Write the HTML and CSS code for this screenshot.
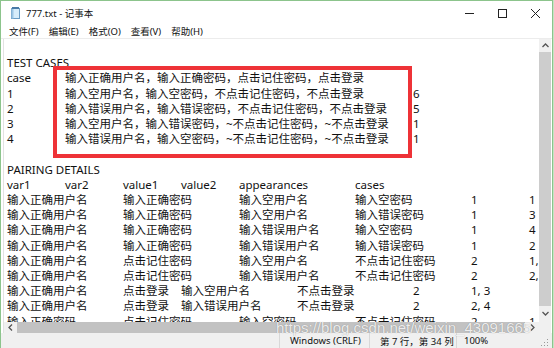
FILE: index.html
```html
<!DOCTYPE html>
<html lang="zh-CN">
<head>
<meta charset="utf-8">
<title>777.txt - 记事本</title>
<link rel="stylesheet" href="styles.css">
</head>
<body>
<div class="window">
  <div class="titlebar">
    <svg class="app-icon" width="9" height="12" viewBox="0 0 9 12">
      <rect x="0.5" y="1.5" width="8" height="10" fill="#d6ecfa" stroke="#6a9cc4"/>
      <rect x="0.5" y="1.5" width="2" height="10" fill="#9cc6e6"/>
      <rect x="1" y="0" width="7" height="2" fill="#4a7aa6"/>
    </svg>
    <span class="title">777.txt - 记事本</span>
    <div class="controls">
      <span class="ctl"><svg width="9" height="9" viewBox="0 0 9 9"><path d="M0 4.5H9" stroke="#222" stroke-width="1"/></svg></span>
      <span class="ctl"><svg width="9" height="9" viewBox="0 0 9 9"><rect x="0.5" y="0.5" width="8" height="8" fill="none" stroke="#222" stroke-width="1"/></svg></span>
      <span class="ctl"><svg width="9" height="9" viewBox="0 0 9 9"><path d="M0 0L9 9M9 0L0 9" stroke="#222" stroke-width="1"/></svg></span>
    </div>
  </div>
  <div class="menubar">
    <span class="menu-item">文件(F)</span>
    <span class="menu-item">编辑(E)</span>
    <span class="menu-item">格式(O)</span>
    <span class="menu-item">查看(V)</span>
    <span class="menu-item">帮助(H)</span>
  </div>
  <div class="client">
    <div class="editor-row">
<pre class="text">

TEST CASES
case&#9;输入正确用户名，输入正确密码，点击记住密码，点击登录
1&#9;输入空用户名，输入空密码，不点击记住密码，不点击登录&#9;6
2&#9;输入错误用户名，输入错误密码，不点击记住密码，不点击登录&#9;5
3&#9;输入空用户名，输入错误密码，~不点击记住密码，~不点击登录&#9;1
4&#9;输入错误用户名，输入空密码，~不点击记住密码，~不点击登录&#9;1

PAIRING DETAILS
var1&#9;var2&#9;value1&#9;value2&#9;appearances&#9;cases
输入正确用户名&#9;输入正确密码&#9;输入空用户名&#9;输入空密码&#9;1&#9;1
输入正确用户名&#9;输入正确密码&#9;输入空用户名&#9;输入错误密码&#9;1&#9;3
输入正确用户名&#9;输入正确密码&#9;输入错误用户名&#9;输入空密码&#9;1&#9;4
输入正确用户名&#9;输入正确密码&#9;输入错误用户名&#9;输入错误密码&#9;1&#9;2
输入正确用户名&#9;点击记住密码&#9;输入空用户名&#9;不点击记住密码&#9;2&#9;1, 3
输入正确用户名&#9;点击记住密码&#9;输入错误用户名&#9;不点击记住密码&#9;2&#9;2, 4
输入正确用户名&#9;点击登录&#9;输入空用户名&#9;不点击登录&#9;2&#9;1, 3
输入正确用户名&#9;点击登录&#9;输入错误用户名&#9;不点击登录&#9;2&#9;2, 4
输入正确密码&#9;点击记住密码&#9;输入空密码&#9;不点击记住密码&#9;2&#9;1, 3</pre>
      <div class="vscroll">
        <div class="sbtn"><svg width="7" height="5" viewBox="0 0 7 5"><path d="M0.5 4L3.5 1L6.5 4" fill="none" stroke="#555" stroke-width="1.3"/></svg></div>
        <div class="vthumb"></div>
        <div class="sbtn down"><svg width="7" height="5" viewBox="0 0 7 5"><path d="M0.5 1L3.5 4L6.5 1" fill="none" stroke="#555" stroke-width="1.3"/></svg></div>
      </div>
    </div>
    <div class="hscroll-row">
      <div class="hscroll">
        <div class="hbtn"><svg width="5" height="7" viewBox="0 0 5 7"><path d="M4 0.5L1 3.5L4 6.5" fill="none" stroke="#555" stroke-width="1.3"/></svg></div>
        <div class="hthumb"></div>
        <div class="hbtn right"><svg width="5" height="7" viewBox="0 0 5 7"><path d="M1 0.5L4 3.5L1 6.5" fill="none" stroke="#555" stroke-width="1.3"/></svg></div>
      </div>
      <div class="corner"></div>
    </div>
  </div>
  <div class="statusbar">
    <div class="seg seg-empty"></div>
    <div class="seg seg-eol">Windows (CRLF)</div>
    <div class="seg seg-pos">第 7 行，第 34 列</div>
    <div class="seg seg-zoom">100%</div>
    <svg class="grip" width="8" height="8" viewBox="0 0 8 8">
      <rect x="6" y="0" width="1" height="1" fill="#999"/>
      <rect x="3" y="3" width="1" height="1" fill="#999"/>
      <rect x="6" y="3" width="1" height="1" fill="#999"/>
      <rect x="0" y="6" width="1" height="1" fill="#999"/>
      <rect x="3" y="6" width="1" height="1" fill="#999"/>
      <rect x="6" y="6" width="1" height="1" fill="#999"/>
    </svg>
  </div>
  <div class="annotation"></div>
  <div class="watermark">https://blog.csdn.net/weixin_43091665</div>
</div>
</body>
</html>
```
FILE: styles.css
```css
* { box-sizing: border-box; }
html, body { margin: 0; padding: 0; }
body {
  width: 554px;
  height: 348px;
  overflow: hidden;
  background: #c4e4c4;
  font-family: "Noto Sans", "Noto Sans CJK SC", sans-serif;
  color: #111;
}
.window {
  position: relative;
  width: 553px;
  height: 348px;
  background: #fff;
  border: 1px solid #8cc48c;
  border-bottom: 0;
  display: flex;
  flex-direction: column;
}
.titlebar {
  height: 23px;
  flex: none;
  display: flex;
  align-items: center;
  padding-left: 10px;
  padding-top: 1px;
}
.app-icon { display: block; flex: none; }
.title {
  margin-left: 6px;
  font-size: 9.5px;
  color: #111;
}
.controls {
  margin-left: auto;
  display: flex;
}
.ctl {
  width: 33px;
  height: 22px;
  display: flex;
  align-items: center;
  justify-content: center;
}
.ctl svg { display: block; }
.menubar {
  height: 15px;
  flex: none;
  display: flex;
  align-items: center;
  gap: 10px;
  padding-left: 8px;
  border-bottom: 1px solid #ececec;
  font-size: 9.5px;
}
.client {
  flex: 1;
  display: flex;
  flex-direction: column;
  margin-left: 2px;
  border-left: 1px solid #e2e2e2;
  min-height: 0;
}
.editor-row {
  height: 283px;
  flex: none;
  display: flex;
}
.text {
  flex: 1;
  margin: 0;
  padding: 1px 0 0 3px;
  font-family: "Noto Sans", "Noto Sans CJK SC", sans-serif;
  font-size: 11.5px;
  line-height: 15.2px;
  tab-size: 58px;
  -moz-tab-size: 58px;
  white-space: pre;
  overflow: hidden;
  color: #111;
}
.vscroll {
  width: 12px;
  margin-right: 1px;
  flex: none;
  display: flex;
  flex-direction: column;
  background: #f0f0f0;
  padding-bottom: 2px;
}
.sbtn {
  height: 13px;
  display: flex;
  align-items: center;
  justify-content: center;
}
.sbtn.down { height: 14px; }
.vthumb {
  flex: 1;
  background: #cdcdcd;
}
.hscroll-row {
  height: 11px;
  flex: none;
  display: flex;
}
.hscroll {
  flex: 1;
  display: flex;
  background: #f0f0f0;
}
.hbtn {
  width: 13px;
  display: flex;
  align-items: center;
  justify-content: center;
}
.hbtn.right { width: 14px; }
.hthumb {
  flex: 1;
  background: #c2c2c2;
}
.corner {
  width: 12px;
  margin-right: 1px;
  background: #f0f0f0;
}
.statusbar {
  height: 15px;
  flex: none;
  display: flex;
  align-items: center;
  background: #f0f0f0;
  font-size: 9.5px;
  color: #111;
  position: relative;
}
.seg {
  height: 100%;
  display: flex;
  align-items: center;
  white-space: nowrap;
}
.seg-empty { width: 278px; }
.seg-eol { width: 90px; padding-left: 10px; border-left: 1px solid #d8d8d8; }
.seg-pos { width: 87px; padding-left: 10px; border-left: 1px solid #d8d8d8; }
.seg-zoom { flex: 1; padding-left: 7px; border-left: 1px solid #d8d8d8; }
.grip { display: block; margin: 5px 3px 0 0; flex: none; }
.annotation {
  position: absolute;
  left: 52px;
  top: 65px;
  width: 359px;
  height: 92px;
  border: 4px solid #ee3237;
}
.watermark {
  position: absolute;
  left: 275px;
  top: 320px;
  font-family: "Liberation Sans", Arial, sans-serif;
  font-size: 15px;
  line-height: 13px;
  color: rgba(255, 255, 255, 0.85);
  text-shadow: 0 0 1px rgba(0, 0, 0, 0.35);
  white-space: nowrap;
}
```
